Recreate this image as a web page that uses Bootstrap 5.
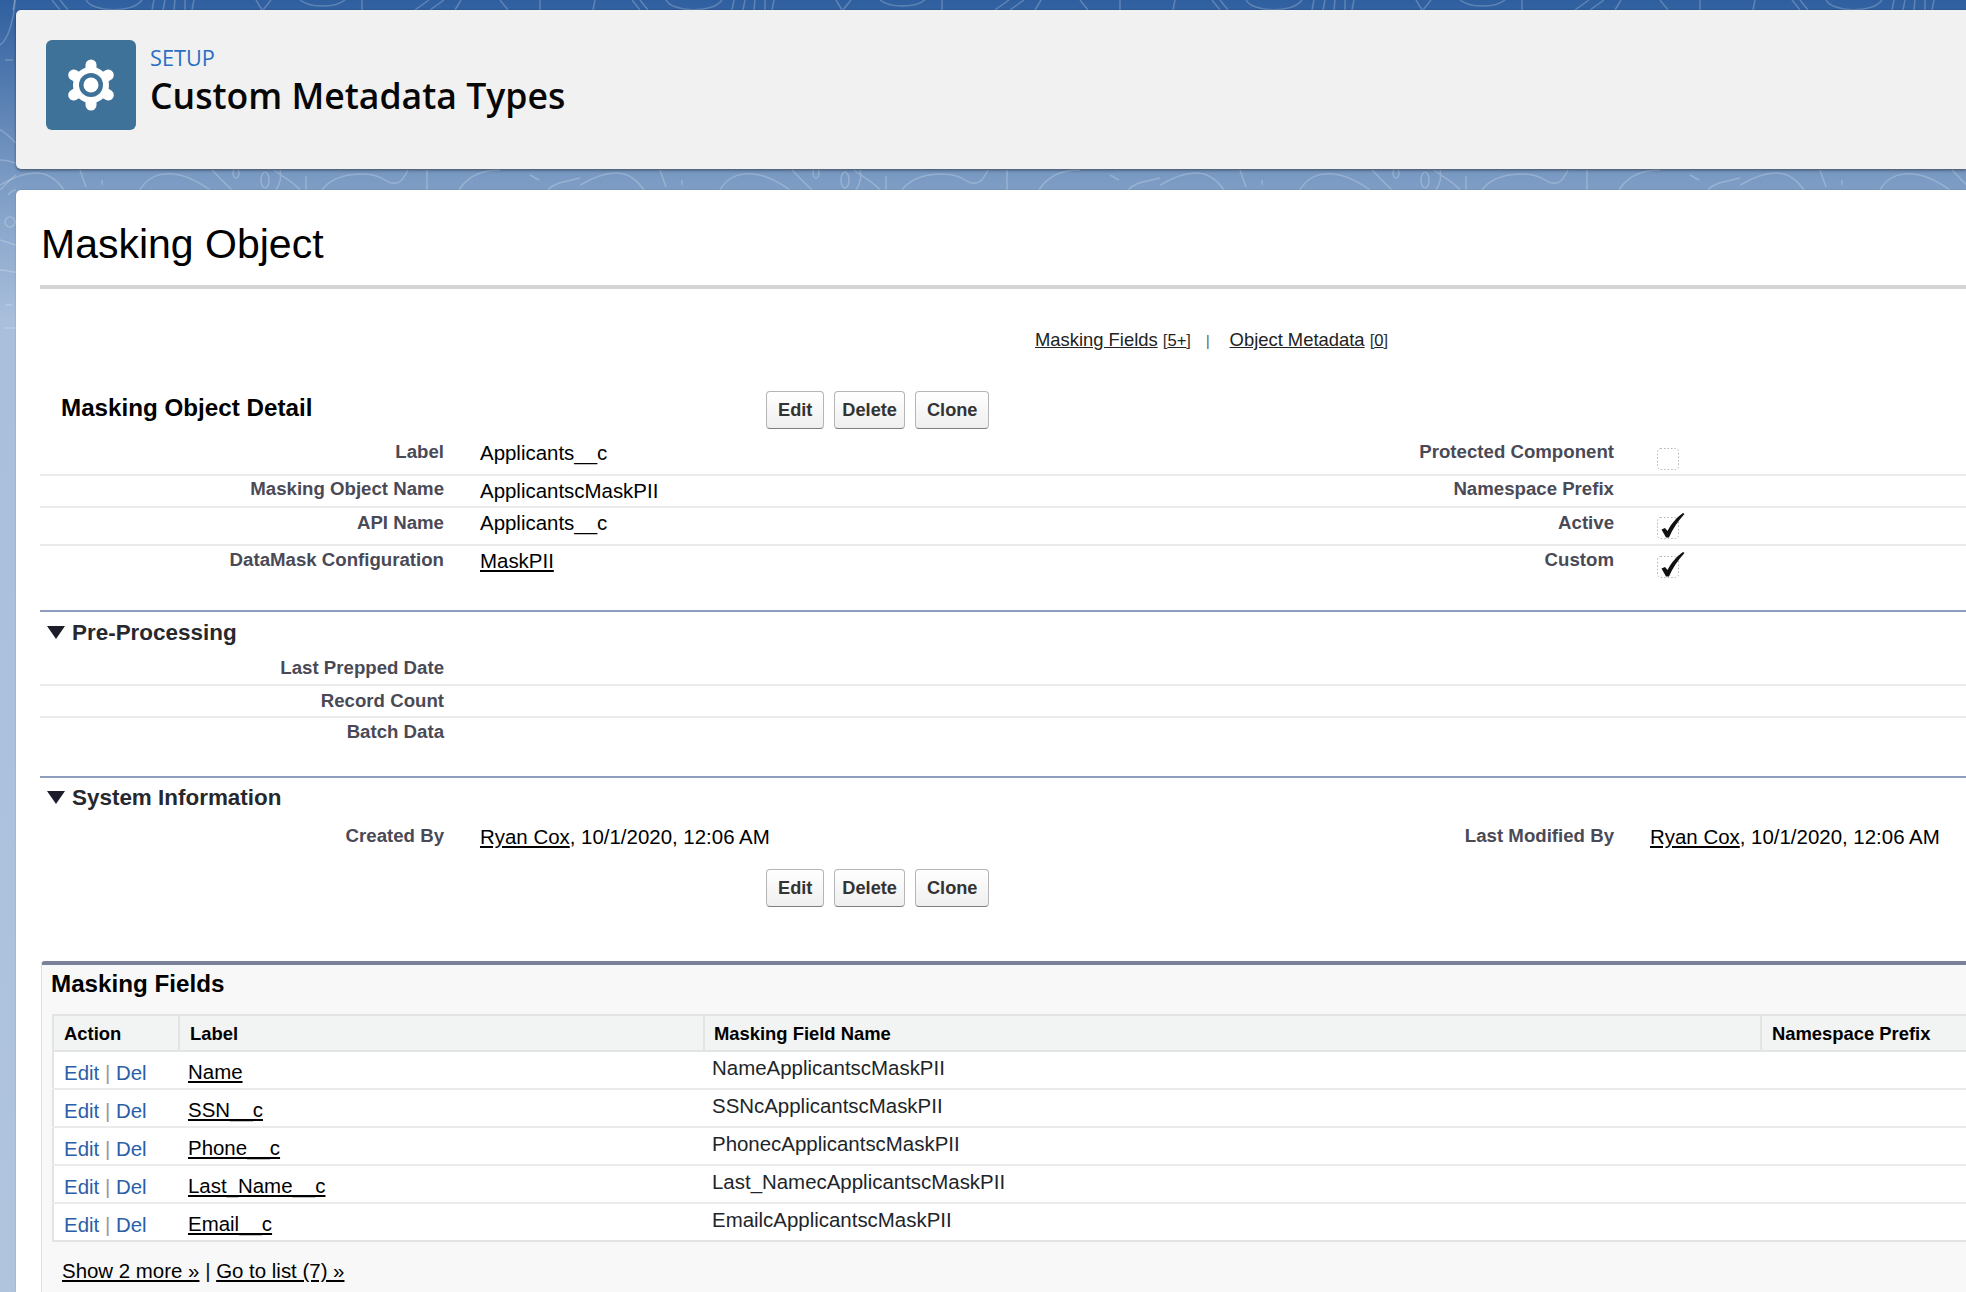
<!DOCTYPE html>
<html lang="en">
<head>
  <meta charset="UTF-8" />
  <title>Custom Metadata Types</title>
  <link href="https://cdn.jsdelivr.net/npm/bootstrap@5.3.0/dist/css/bootstrap.min.css" rel="stylesheet"/>
  <style>
    html, body { height: 100vh; }
    body {
      background: linear-gradient(180deg, #2f5f9f 0, #7b9bc4 180px, #a9bfdc 320px, #b0c4de 1292px);
      font-family: "Liberation Sans", Arial, sans-serif;
      font-size: 20.45px;
      color: #000;
      overflow: hidden;
      position: relative;
    }
    .bg-lines { position: absolute; left: 0; top: 0; width: 100%; height: 340px; }
    .page-wrap { position: relative; padding: 10px 0 0 16px; height: 100vh; overflow: hidden; }

    .setup-head {
      background: #f1f1f1;
      height: 159px;
      border-radius: 5px 0 0 5px;
      box-shadow: 0 0 2px rgba(0,0,0,.25), 0 2px 3px rgba(0,0,0,.3);
      padding: 30px;
    }
    .setup-icon { width: 90px; height: 90px; background: #3f7299; border-radius: 6px; }
    .setup-text { margin-left: -2px; }
    .setup-eyebrow { font-family: "Open Sans", sans-serif; font-size: 21.7px; line-height: 29px; color: #2a6fc4; margin-top: 3px; }
    .setup-title { font-family: "Open Sans", sans-serif; font-weight: 600; font-size: 35.6px; line-height: 46px; color: #080707; margin: 0; }

    .main-card {
      background: #fff;
      margin-top: 21px;
      height: 1102px;
      border-radius: 5px 0 0 0;
      box-shadow: 0 0 2px rgba(0,0,0,.2);
      padding-left: 24px;
    }
    .page-name { font-size: 41px; font-weight: 400; line-height: 48px; margin: 0; padding: 30px 0 0 1px; border-bottom: 4px solid #d4d4d4; height: 99px; }
    .rel-links { height: 102px; padding: 39px 0 0 995px; font-size: 18.4px; line-height: 24px; color: #333; }
    .rel-links a { color: #222; }
    .rel-links small { font-size: 16.6px; }
    .rel-sep { font-size: 14px; color: #555; padding: 0 20px 0 15px; }

    .detail-top { height: 40px; }
    .detail-name { width: 726px; padding: 1px 0 0 21px; font-size: 24.2px; font-weight: 700; line-height: 32px; margin: 0; }
    .btn-gap { gap: 10px; }
    .sf-btn {
      height: 38px;
      padding: 0 11px;
      font-weight: 700;
      font-size: 18.2px;
      line-height: 34px;
      color: #333;
      background: linear-gradient(180deg, #fff, #efefef);
      border: 1px solid #b5b5b5;
      border-bottom-color: #7f7f7f;
      border-radius: 4px;
    }
    .btn-del { padding: 0 7px; }
    .btn-row-foot { padding-left: 726px; height: 92px; }

    .f-row { display: flex; border-bottom: 2px solid #ebebeb; }
    .f-row.no-line { border-bottom: 0; }
    .f-label { width: 404px; text-align: right; font-weight: 700; font-size: 18.65px; color: #4a4a56; line-height: 24px; }
    .f-val { width: 766px; padding-left: 36px; line-height: 24px; }
    .f-val2 { padding-left: 36px; line-height: 24px; }
    .f-val a, .f-val2 a { color: #000; }
    .f-chk { margin-left: 7px; }

    /* alturas y ajuste de cada fila */
    .r-label { height: 45px; }
    .r-label .f-label { padding-top: 9px; }
    .r-label .f-val { padding-top: 10px; }
    .r-label .f-val2 { padding-top: 13px; }
    .r-name { height: 32px; }
    .r-name .f-label { padding-top: 1px; }
    .r-name .f-val { padding-top: 3px; }
    .r-api { height: 38px; }
    .r-api .f-label { padding-top: 3px; }
    .r-api .f-val { padding-top: 3px; }
    .r-api .f-val2 { padding-top: 5px; }
    .r-mask { height: 64px; }
    .r-mask .f-label { padding-top: 2px; }
    .r-mask .f-val { padding-top: 3px; }
    .r-mask .f-val2 { padding-top: 6px; }
    .r-prep { height: 34px; }
    .r-prep .f-label { padding-top: 4px; }
    .r-count { height: 32px; }
    .r-count .f-label { padding-top: 3px; }
    .r-batch { height: 58px; }
    .r-batch .f-label { padding-top: 2px; }
    .r-created { height: 52px; }
    .r-created .f-label { padding-top: 7px; }
    .r-created .f-val, .r-created .f-val2 { padding-top: 8px; }

    .sec-head { border-top: 2px solid #8e9dbe; display: flex; align-items: center; padding-left: 7px; }
    .sec-pre { height: 42px; padding-top: 3px; }
    .sec-sys { height: 41px; padding-top: 1px; }
    .sec-head h3 { font-size: 22.45px; font-weight: 700; color: #27282e; margin: 0 0 0 7px; }
    .tri { width: 0; height: 0; border-left: 9px solid transparent; border-right: 9px solid transparent; border-top: 13px solid #1c1d2b; margin-top: -2px; }

    .list-panel { border-top: 4px solid #7a8299; border-left: 1px solid #e0e0e0; background: #f8f8f8; border-radius: 4px 0 0 0; margin-left: 1px; height: 332px; padding: 0 0 0 10px; }
    .list-panel h3 { font-size: 24.2px; font-weight: 700; margin: 0 0 0 -1px; line-height: 38px; height: 49px; }
    .list-panel .table { margin: 0; table-layout: fixed; --bs-table-bg: #fff; border: 2px solid #e3e5e5; border-right: 0; font-size: 20.45px; }
    .list-panel th { background: #f2f3f3; font-size: 18.4px; font-weight: 700; color: #000; padding: 0 0 0 10px; height: 36px; line-height: 33px; border-bottom: 2px solid #e3e5e5; border-right: 2px solid #e3e5e5; }
    .list-panel th:nth-child(3) { padding-left: 9px; }
    .list-panel th:last-child { border-right: 0; }
    .list-panel td { padding: 0 0 0 8px; height: 38px; border-bottom: 2px solid #ebebeb; line-height: 30px; vertical-align: middle; }
    .list-panel tbody tr:last-child td { border-bottom: 0; }
    .list-panel td a { color: #000; }
    .list-panel td.act { padding-left: 10px; padding-top: 5px; color: #999; }
    .list-panel td.act a { color: #2a5ea8; text-decoration: none; }
    .list-panel td.cell-label { padding: 3px 0 0 9px; }
    .list-panel td.name-up { padding-bottom: 4px; }
    .col-act { width: 126px; }
    .col-label { width: 525px; }
    .col-name { width: 1057px; }
    .more-links { padding: 15px 0 0 10px; line-height: 28px; color: #111; }
    .more-links a { color: #000; }
  </style>
</head>
<body>

  <!-- fondo con lineas -->
  <svg class="bg-lines" width="1966" height="340" fill="none" stroke="#fff" stroke-opacity=".22" stroke-width="1.5">
    <defs>
      <pattern id="curvas" width="580" height="340" patternUnits="userSpaceOnUse">
        <path d="M0 185C12 178 25 172 38 173S58 182 64 190M80 170l6 17M102 180v5M140 190C150 172 175 165 210 190"/>
        <ellipse cx="236" cy="173" rx="3" ry="5"/>
        <ellipse cx="265" cy="180" rx="4" ry="8"/>
        <path d="M212 170C220 178 225 184 232 190M274 170C284 178 294 182 300 190M280 170c2 8 0 14-4 20M306 176v14"/>
        <path d="M322 190C335 172 370 170 385 180S405 175 408 170M427 170v20M459 190C470 172 490 170 500 170M530 175l9 5M548 190C555 182 565 182 580 178"/>
        <path d="M15 0l-2 10M52 0l8 10M60 0l8 10M86 0C92 12 132 14 142 0M154 0l-2 10M165 0l-2 10M175 0l-1 10M185 0v10M194 0l-2 10M256 0l6 10M271 0l-8 10M300 0C310 8 335 8 345 0M362 0v10M415 10l14-10M430 10l14-10M455 10l6-10M500 0l8 10M540 0v10"/>
      </pattern>
    </defs>
    <rect width="1966" height="340" fill="url(#curvas)" stroke="none"/>
    <path d="M15 0C14 20 8 40 0 45M5 60h8M0 130C6 132 12 140 16 143M0 160C6 160 12 162 16 163M0 190C6 184 12 178 16 175M8 195C10 192 14 190 16 190M0 240C6 242 12 244 16 245M0 270C6 270 12 272 16 272M5 305h7M4 328h12"/>
    <circle cx="10" cy="222" r="5"/>
  </svg>

  <div class="page-wrap">
    <!-- Cabecera -->
    <div class="setup-head d-flex gap-3">
      <div class="setup-icon d-flex align-items-center justify-content-center flex-shrink-0">
        <svg width="54" height="54" viewBox="-27 -27 54 54">
          <g stroke="#fff" stroke-width="11" stroke-linecap="round">
            <line x1="0" y1="0" x2="0" y2="-20"/>
            <line x1="0" y1="0" x2="17.3" y2="-10"/>
            <line x1="0" y1="0" x2="17.3" y2="10"/>
            <line x1="0" y1="0" x2="0" y2="20"/>
            <line x1="0" y1="0" x2="-17.3" y2="10"/>
            <line x1="0" y1="0" x2="-17.3" y2="-10"/>
          </g>
          <circle r="18" fill="#fff"/>
          <circle r="12" fill="#3f7299"/>
          <circle r="7.5" fill="#fff"/>
        </svg>
      </div>
      <div class="setup-text">
        <div class="setup-eyebrow">SETUP</div>
        <h1 class="setup-title">Custom Metadata Types</h1>
      </div>
    </div>

    <div class="main-card">
      <h2 class="page-name">Masking Object</h2>

      <div class="rel-links">
        <a href="#">Masking Fields</a> <small>[<a href="#">5+</a>]</small><span class="rel-sep">|</span><a href="#">Object Metadata</a> <small>[<a href="#">0</a>]</small>
      </div>

      <!-- Detalle -->
      <div class="detail-top d-flex align-items-start">
        <h3 class="detail-name">Masking Object Detail</h3>
        <div class="d-flex btn-gap">
          <button class="sf-btn">Edit</button>
          <button class="sf-btn btn-del">Delete</button>
          <button class="sf-btn">Clone</button>
        </div>
      </div>

      <div class="f-row r-label">
        <div class="f-label">Label</div><div class="f-val">Applicants__c</div>
        <div class="f-label">Protected Component</div>
        <div class="f-val2"><svg class="f-chk" width="28" height="28" viewBox="0 0 28 28"><rect x=".5" y="4.500" width="21" height="21" rx="3" fill="none" stroke="#b5b5b5" stroke-dasharray="1.500 2"/></svg></div>
      </div>
      <div class="f-row r-name">
        <div class="f-label">Masking Object Name</div><div class="f-val">ApplicantscMaskPII</div>
        <div class="f-label">Namespace Prefix</div><div class="f-val2"></div>
      </div>
      <div class="f-row r-api">
        <div class="f-label">API Name</div><div class="f-val">Applicants__c</div>
        <div class="f-label">Active</div>
        <div class="f-val2"><svg class="f-chk" width="28" height="28" viewBox="0 0 28 28"><rect x=".5" y="4.500" width="21" height="21" rx="3" fill="none" stroke="#b5b5b5" stroke-dasharray="1.500 2"/><path d="M4.500 16.500l3.500-1.500 2.500 3C14 11 20 4 26 0l1.500 1C21 8 15.500 16 12 24.500H9z" fill="#111"/></svg></div>
      </div>
      <div class="f-row no-line r-mask">
        <div class="f-label">DataMask Configuration</div><div class="f-val"><a href="#">MaskPII</a></div>
        <div class="f-label">Custom</div>
        <div class="f-val2"><svg class="f-chk" width="28" height="28" viewBox="0 0 28 28"><rect x=".5" y="4.500" width="21" height="21" rx="3" fill="none" stroke="#b5b5b5" stroke-dasharray="1.500 2"/><path d="M4.500 16.500l3.500-1.500 2.500 3C14 11 20 4 26 0l1.500 1C21 8 15.500 16 12 24.500H9z" fill="#111"/></svg></div>
      </div>

      <div class="sec-head sec-pre"><div class="tri"></div><h3>Pre-Processing</h3></div>
      <div class="f-row r-prep"><div class="f-label">Last Prepped Date</div></div>
      <div class="f-row r-count"><div class="f-label">Record Count</div></div>
      <div class="f-row no-line r-batch"><div class="f-label">Batch Data</div></div>

      <div class="sec-head sec-sys"><div class="tri"></div><h3>System Information</h3></div>
      <div class="f-row no-line r-created">
        <div class="f-label">Created By</div><div class="f-val"><a href="#">Ryan Cox</a>, 10/1/2020, 12:06 AM</div>
        <div class="f-label">Last Modified By</div><div class="f-val2"><a href="#">Ryan Cox</a>, 10/1/2020, 12:06 AM</div>
      </div>
      <div class="d-flex btn-gap btn-row-foot">
        <button class="sf-btn">Edit</button>
        <button class="sf-btn btn-del">Delete</button>
        <button class="sf-btn">Clone</button>
      </div>

      <!-- Lista -->
      <div class="list-panel">
        <h3>Masking Fields</h3>
        <table class="table">
          <colgroup><col class="col-act"><col class="col-label"><col class="col-name"><col></colgroup>
          <thead><tr><th>Action</th><th>Label</th><th>Masking Field Name</th><th>Namespace Prefix</th></tr></thead>
          <tbody id="filas"></tbody>
        </table>
        <div class="more-links"><a href="#">Show 2 more »</a> | <a href="#">Go to list (7) »</a></div>
      </div>
    </div>
  </div>

  <script>
    const campos = ["Name", "SSN__c", "Phone__c", "Last_Name__c", "Email__c"];
    const nombres = ["Name", "SSNc", "Phonec", "Last_Namec", "Emailc"];
    const filas = document.getElementById("filas");
    campos.forEach((campo, i) => {
      filas.innerHTML += `
        <tr>
          <td class="act"><a href="#">Edit</a> | <a href="#">Del</a></td>
          <td class="cell-label"><a href="#">${campo}</a></td>
          <td class="name-up">${nombres[i]}ApplicantscMaskPII</td>
          <td></td>
        </tr>`;
    });
  </script>
  <script src="https://cdn.jsdelivr.net/npm/bootstrap@5.3.0/dist/js/bootstrap.bundle.min.js"></script>
</body>
</html>
